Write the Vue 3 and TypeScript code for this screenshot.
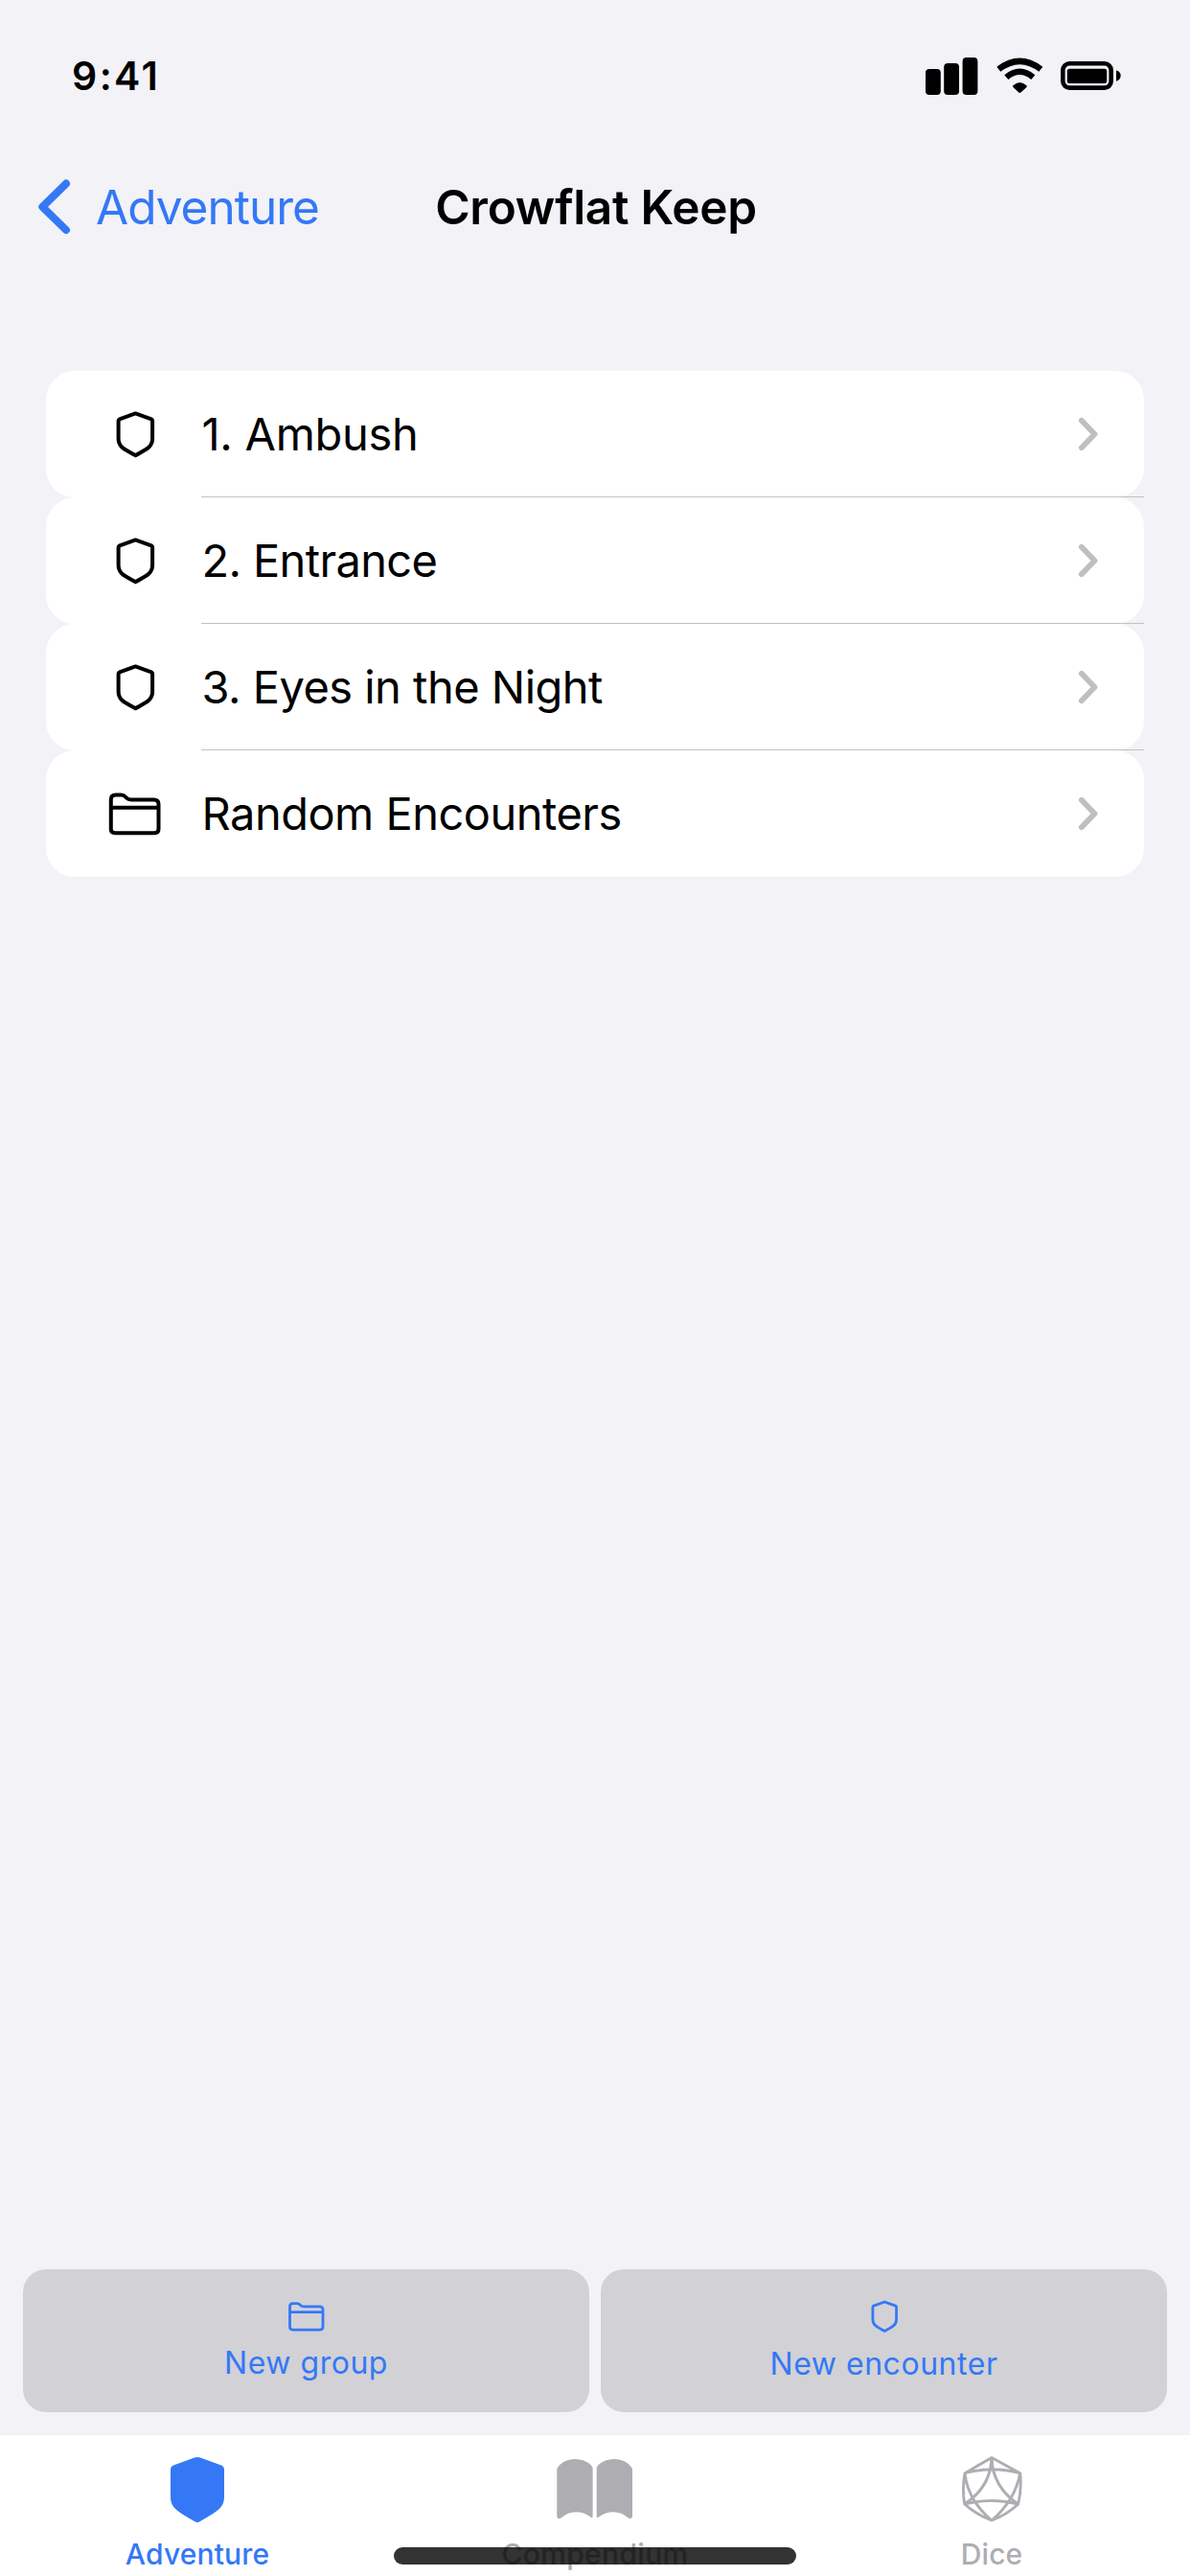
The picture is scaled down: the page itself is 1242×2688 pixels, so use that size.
<script setup lang="ts">
type IconName = 'shield' | 'folder'
type TabName = 'adventure' | 'compendium' | 'dice'

interface Row {
  label: string
  icon: IconName
  spacing: number
}

interface Action {
  label: string
  icon: IconName
}

interface Tab {
  id: TabName
  label: string
}

const outlines: Record<IconName, string> = {
  shield:
    'M36.4 8.4L53 14.3Q54.1 14.8 54.1 16V34.5C54.1 43.5 48 46 36.4 52.2C24.8 46 18.6 43.5 18.6 34.5V16Q18.6 14.8 19.8 14.3Z',
  folder:
    'M10.8 46V15.5Q10.8 10.6 15.5 10.6H21.5C25 10.6 25.4 12 27 13.6S29.5 15.5 32 15.5H55.5Q60.5 15.5 60.5 20V46Q60.5 50.2 56 50.2H15.5Q10.8 50.2 10.8 46ZM10.8 23.7H60.5',
}

const rows: Row[] = [
  { label: '1. Ambush', icon: 'shield', spacing: -0.29 },
  { label: '2. Entrance', icon: 'shield', spacing: -0.65 },
  { label: '3. Eyes in the Night', icon: 'shield', spacing: -0.52 },
  { label: 'Random Encounters', icon: 'folder', spacing: -0.51 },
]

const actions: Action[] = [
  { label: 'New group', icon: 'folder' },
  { label: 'New encounter', icon: 'shield' },
]

const tabs: Tab[] = [
  { id: 'adventure', label: 'Adventure' },
  { id: 'compendium', label: 'Compendium' },
  { id: 'dice', label: 'Dice' },
]

const activeTab: TabName = 'adventure'
</script>

<template>
  <div class="screen">
    <header class="status">
      <span class="time">9:41</span>
      <svg class="indicators" width="206" height="44" viewBox="0 0 206 44">
        <rect x="1" y="15" width="15.8" height="27" rx="4" />
        <rect x="20.2" y="9" width="15.8" height="33" rx="4" />
        <rect x="39.6" y="3" width="15.8" height="39" rx="4" />
        <g class="wave">
          <path d="M77.3 15.3Q99.3 -1.5 121.3 15.3" />
          <path d="M85.3 23.6Q99.3 12 113.3 23.6" />
        </g>
        <path d="M92 32.5Q99.3 25.5 106.8 32.5Q107 33.4 106.2 34.2L100.4 39.6Q99.3 40.4 98.3 39.6L92.7 34.2Q91.8 33.4 92 32.5Z" />
        <rect class="shell" x="144.3" y="9.3" width="50.4" height="25.3" rx="7" />
        <rect x="148.8" y="14.8" width="41.4" height="15.2" rx="2.5" />
        <path d="M200 16.6Q204.7 18 204.7 22T200 27.8Z" />
      </svg>
    </header>

    <nav class="navbar">
      <a class="back">
        <svg width="34" height="60" viewBox="0 0 34 60">
          <path d="M29 5.6L4.3 29.8L29 54" />
        </svg>
        <span>Adventure</span>
      </a>
      <h1 class="title">Crowflat Keep</h1>
    </nav>

    <main class="list">
      <div v-for="row in rows" :key="row.label" class="row">
        <svg class="outline" width="72" height="60" viewBox="0 0 72 60">
          <path :d="outlines[row.icon]" />
        </svg>
        <span class="label" :style="{ letterSpacing: row.spacing + 'px' }">{{ row.label }}</span>
        <svg class="chevron" width="22" height="38" viewBox="0 0 22 38">
          <path d="M4.8 4.8L18.5 19L4.8 33.2" />
        </svg>
      </div>
    </main>

    <section class="actions">
      <button v-for="action in actions" :key="action.label" :class="['action', action.icon]">
        <svg class="outline" width="50" height="42" viewBox="0 0 72 60">
          <path :d="outlines[action.icon]" />
        </svg>
        <span>{{ action.label }}</span>
      </button>
    </section>

    <footer class="tabbar">
      <div v-for="tab in tabs" :key="tab.id" :class="['tab', tab.id, { active: tab.id === activeTab }]">
        <svg width="80" height="76" viewBox="0 0 80 76">
          <path
            v-if="tab.id === 'adventure'"
            d="M37 5.6Q40 4.4 43 5.6L65 13.4Q68 14.8 68 18V46C68 58 61 61.5 42.5 72.2Q40 73.6 37.5 72.2C19 61.5 12 58 12 46V18Q12 14.8 15 13.4Z"
          />
          <template v-else-if="tab.id === 'compendium'">
            <path d="M.3 17C4 10.4 11 7 19.2 7S34.2 10.5 37.6 15.5V67Q37.2 69 35.5 67.6C31 64 26 62.2 20 62.2S9 64.5 5.2 68Q3.4 69.4 1.5 68.8Q.3 68.2 .3 66.5Z" />
            <path d="M79 17C75.3 10.4 68.3 7 60.1 7S45.1 10.5 41.7 15.5V67Q42.1 69 43.8 67.6C48.3 64 53.3 62.2 59.3 62.2S70.3 64.5 74.1 68Q75.9 69.4 77.8 68.8Q79 68.2 79 66.5Z" />
          </template>
          <path
            v-else
            class="wire"
            d="M40 5.6L12 21.7Q9 38 11.7 54Q24 65 40 71Q56 65 67.7 54Q71.5 38 69.7 21.7ZM12 21.7Q40.5 13.8 69.7 21.7M11.7 54Q40 46.7 67.7 54M40 5.6Q39 36 11.7 54M40 5.6Q41 36 67.7 54M12 21.7Q15 50 40 71M69.7 21.7Q64.5 50 40 71"
          />
        </svg>
        <span>{{ tab.label }}</span>
      </div>
      <i class="home-indicator"></i>
    </footer>
  </div>
</template>

<style>
body {
  margin: 0;
  background: #f2f2f7;
}
</style>

<style scoped>
.screen {
  display: flex;
  flex-direction: column;
  box-sizing: border-box;
  width: 1242px;
  height: 2688px;
  overflow: hidden;
  background: #f2f2f7;
  color: #000;
  font-family: Inter, 'Noto Sans', sans-serif;
}

svg {
  display: block;
  flex: none;
}

.status {
  display: flex;
  align-items: center;
  justify-content: space-between;
  height: 158px;
  padding: 0 71px 0 75px;
}

.time {
  font-size: 41px;
  font-weight: 600;
  letter-spacing: 2.4px;
}

.wave {
  fill: none;
  stroke: #000;
  stroke-width: 6.4;
}

.shell {
  fill: none;
  stroke: #000;
  stroke-width: 4.6;
}

.navbar {
  display: grid;
  grid-template-columns: 1fr auto 1fr;
  align-items: center;
  height: 115px;
  padding: 0 38px 0 40px;
  font-size: 49.5px;
}

.back {
  display: flex;
  align-items: center;
  gap: 26px;
  color: #3478f6;
  letter-spacing: -0.99px;
}

.back svg {
  fill: none;
  stroke: currentColor;
  stroke-width: 8;
  stroke-linecap: round;
  stroke-linejoin: round;
}

.title {
  margin: 0;
  font-size: 49.5px;
  font-weight: 600;
  letter-spacing: -0.24px;
}

.list {
  margin: 114px 48px 0;
}

.row {
  position: relative;
  display: flex;
  align-items: center;
  box-sizing: border-box;
  height: 132px;
  padding: 0 48px 0 57px;
  border-radius: 30px;
  background: #fff;
  font-size: 47px;
}

.row:not(:last-child)::after {
  content: '';
  position: absolute;
  right: 0;
  bottom: 0;
  left: 162px;
  height: 1px;
  background: #c2c2c4;
}

.label {
  flex: 1;
  margin: -2px 0 0 33.5px;
}

.outline {
  fill: none;
  stroke: currentColor;
  stroke-width: 4;
  stroke-linejoin: round;
}

.chevron {
  fill: none;
  stroke: #bfbfbf;
  stroke-width: 5.8;
  stroke-linecap: round;
  stroke-linejoin: round;
}

.actions {
  display: flex;
  gap: 12px;
  margin: auto 24px 24px;
}

.action {
  display: flex;
  flex: 1;
  flex-direction: column;
  align-items: center;
  gap: 8px;
  box-sizing: border-box;
  height: 149px;
  padding: 28px 0 0;
  border: 0;
  border-radius: 24px;
  background: #d2d1d6;
  color: #3478f6;
  font-family: inherit;
  font-size: 32px;
  line-height: 40px;
  letter-spacing: 0.53px;
}

.action.shield {
  gap: 9px;
}

.tabbar {
  position: relative;
  display: flex;
  height: 147px;
  background: #fff;
}

.tab {
  display: flex;
  flex: none;
  flex-direction: column;
  align-items: center;
  gap: 12px;
  box-sizing: border-box;
  width: 414px;
  padding-top: 18px;
  color: #aeadb2;
  font-size: 30px;
  font-weight: 500;
  line-height: 36px;
  letter-spacing: 0.15px;
}

.tab svg {
  fill: currentColor;
}

.tab.adventure {
  padding-right: 2px;
}

.tab.active {
  color: #3478f6;
}

.tab.compendium {
  letter-spacing: 0.32px;
}

.tab .wire {
  fill: none;
  stroke: currentColor;
  stroke-width: 2.9;
  stroke-linejoin: round;
}

.home-indicator {
  position: absolute;
  top: 117px;
  left: 411px;
  width: 420px;
  height: 18px;
  border-radius: 9px;
  background: rgba(0, 0, 0, 0.8);
}
</style>
